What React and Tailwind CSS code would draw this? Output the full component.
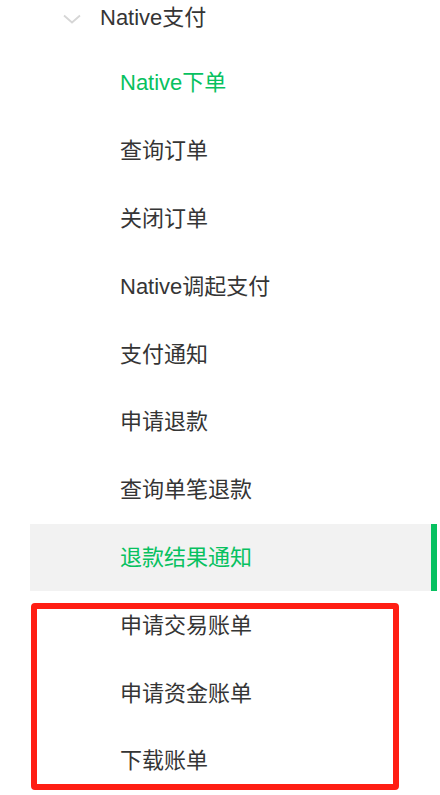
import React from "react";

const items = [
  { t: "Native下单", green: true },
  { t: "查询订单" },
  { t: "关闭订单" },
  { t: "Native调起支付" },
  { t: "支付通知" },
  { t: "申请退款" },
  { t: "查询单笔退款" },
  { t: "退款结果通知", active: true },
  { t: "申请交易账单" },
  { t: "申请资金账单" },
  { t: "下载账单" },
];

export default function App() {
  return (
    <div
      className="relative w-[440px] h-[795px] bg-white overflow-hidden"
      style={{ fontFamily: '"Liberation Sans", Arial, "Noto Sans CJK SC", sans-serif' }}
    >
      <div className="flex items-center h-[34px] text-[22px] text-[#353535]">
        <div className="w-[100px] flex pl-[62px] pt-[4px]">
          <svg width="20" height="10" viewBox="0 0 20 10" fill="none">
            <path d="M2 1.5l8 7 8-7" stroke="#d6d6d6" strokeWidth="1.8" />
          </svg>
        </div>
        <span>Native支付</span>
      </div>
      <div className="flex flex-col pt-[15px]">
        {items.map((it, i) => (
          <div
            key={i}
            className={
              "relative ml-[30px] w-[407px] h-[67.8px] flex items-center pl-[90px] text-[22px] " +
              (it.active ? "bg-[#f2f2f2] text-[#07c160]" : it.green ? "text-[#07c160]" : "text-[#353535]")
            }
          >
            {it.t}
            {it.active && <div className="absolute right-0 top-0 bottom-0 w-[6px] bg-[#07c160]" />}
          </div>
        ))}
      </div>
      <div className="absolute left-[31px] top-[603px] w-[368px] h-[187px] border-[6px] border-[#ff1e14] rounded-[4px]" />
    </div>
  );
}
